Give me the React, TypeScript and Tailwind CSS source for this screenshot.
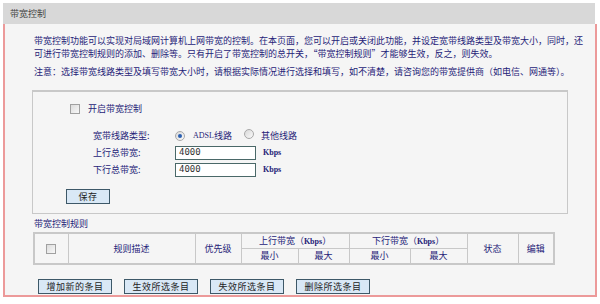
import React from 'react';

const cjk = { fontFamily: '"Noto Sans CJK SC", "Noto Sans", sans-serif' };
const serif = { fontFamily: '"Liberation Serif", "Noto Sans CJK SC", serif' };

function CheckBox() {
  return (
    <span className="inline-block w-[10px] h-[10px] border border-[#a0a0a0] bg-gradient-to-br from-[#dcdcdc] to-[#f8f8f8]" />
  );
}

function Radio({ checked }: { checked?: boolean }) {
  return (
    <span className="inline-flex items-center justify-center w-[10px] h-[10px] rounded-full border border-[#a8a8a8] bg-gradient-to-br from-[#d8d8d8] to-[#fafafa]">
      {checked && <span className="w-[4px] h-[4px] rounded-full bg-[#2a5fb0]" />}
    </span>
  );
}

function Btn({ label, className = '' }: { label: string; className?: string }) {
  return (
    <button
      className={`h-[15px] border border-[#3d5868] bg-[#d9e8f6] text-[9px] leading-none text-[#222] tracking-[0.5px] flex items-center justify-center ${className}`}
      style={cjk}
    >
      {label}
    </button>
  );
}

export default function App() {
  const th = 'border border-[#c8c8c8] font-normal text-center align-middle';
  return (
    <div className="w-[600px] h-[304px] bg-white pt-[3px] pl-[3px]" style={cjk}>
      <div className="w-[594px]">
        <div className="h-[21px] bg-[#d8d8d8] pl-[7px] flex items-center text-[9px] text-[#444] mr-[2px]">
          带宽控制
        </div>
        <div className="h-[273px] border-2 border-t-0 border-[#ec9a9a] bg-[#f5f5f5] pl-[29px] pt-[10px] text-[9px] text-[#1f2378]">
          <div className="leading-[13px] whitespace-nowrap">
            <div>带宽控制功能可以实现对局域网计算机上网带宽的控制。在本页面，您可以开启或关闭此功能，并设定宽带线路类型及带宽大小，同时，还</div>
            <div>可进行带宽控制规则的添加、删除等。只有开启了带宽控制的总开关，“带宽控制规则”才能够生效，反之，则失效。</div>
            <div className="mt-[5px]">注意：选择带宽线路类型及填写带宽大小时，请根据实际情况进行选择和填写，如不清楚，请咨询您的带宽提供商（如电信、网通等）。</div>
          </div>

          <div className="ml-[-2px] mt-[12px] w-[536px] border border-t-2 border-[#c8c8c8] pt-[10px] pb-[9px]">
            <div className="h-[14px] flex items-center pl-[37px] gap-[8px]">
              <CheckBox />
              <span>开启带宽控制</span>
            </div>
            <div className="mt-[11px] pl-[60px] grid grid-cols-[82px_1fr] auto-rows-[17px] items-center">
              <span>宽带线路类型:</span>
              <div className="flex items-center">
                <Radio checked />
                <span className="ml-[8px] text-[8px]" style={serif}>ADSL</span>
                <span>线路</span>
                <span className="ml-[12px]"><Radio /></span>
                <span className="ml-[7px]">其他线路</span>
              </div>
              <span>上行总带宽:</span>
              <div className="flex items-center">
                <div className="w-[81px] h-[14px] border border-[#4a6868] bg-white pl-[3px] flex items-center text-[#333] text-[9px]" style={{ fontFamily: '"DejaVu Sans Mono", monospace' }}>4000</div>
                <span className="ml-[7px] text-[8px] font-bold" style={serif}>Kbps</span>
              </div>
              <span>下行总带宽:</span>
              <div className="flex items-center">
                <div className="w-[81px] h-[14px] border border-[#4a6868] bg-white pl-[3px] flex items-center text-[#333] text-[9px]" style={{ fontFamily: '"DejaVu Sans Mono", monospace' }}>4000</div>
                <span className="ml-[7px] text-[8px] font-bold" style={serif}>Kbps</span>
              </div>
            </div>
            <div className="mt-[11px] pl-[33px]">
              <Btn label="保存" className="w-[44px]" />
            </div>
          </div>

          <div className="mt-[3px] leading-[13px]">带宽控制规则</div>

          <table className="ml-[-1px] mt-[2px] w-[520px] border-collapse table-fixed border-2 border-[#c8c8c8] text-[9px] text-[#1f2378]">
            <colgroup>
              <col className="w-[34px]" />
              <col className="w-[127px]" />
              <col className="w-[46px]" />
              <col className="w-[57px]" />
              <col className="w-[51px]" />
              <col className="w-[61px]" />
              <col className="w-[57px]" />
              <col className="w-[51px]" />
              <col className="w-[36px]" />
            </colgroup>
            <thead>
              <tr className="h-[15px]">
                <th rowSpan={2} className={th}>
                  <span className="inline-flex align-middle"><CheckBox /></span>
                </th>
                <th rowSpan={2} className={th}>规则描述</th>
                <th rowSpan={2} className={th}>优先级</th>
                <th colSpan={2} className={th}>上行带宽（<span className="text-[8px] font-bold" style={serif}>Kbps</span>）</th>
                <th colSpan={2} className={th}>下行带宽（<span className="text-[8px] font-bold" style={serif}>Kbps</span>）</th>
                <th rowSpan={2} className={th}>状态</th>
                <th rowSpan={2} className={th}>编辑</th>
              </tr>
              <tr className="h-[15px]">
                <th className={th}>最小</th>
                <th className={th}>最大</th>
                <th className={th}>最小</th>
                <th className={th}>最大</th>
              </tr>
            </thead>
          </table>

          <div className="mt-[14px] ml-[4px] flex gap-[12px]">
            <Btn label="增加新的条目" className="w-[74px]" />
            <Btn label="生效所选条目" className="w-[74px]" />
            <Btn label="失效所选条目" className="w-[74px]" />
            <Btn label="删除所选条目" className="w-[74px]" />
          </div>
        </div>
      </div>
    </div>
  );
}
